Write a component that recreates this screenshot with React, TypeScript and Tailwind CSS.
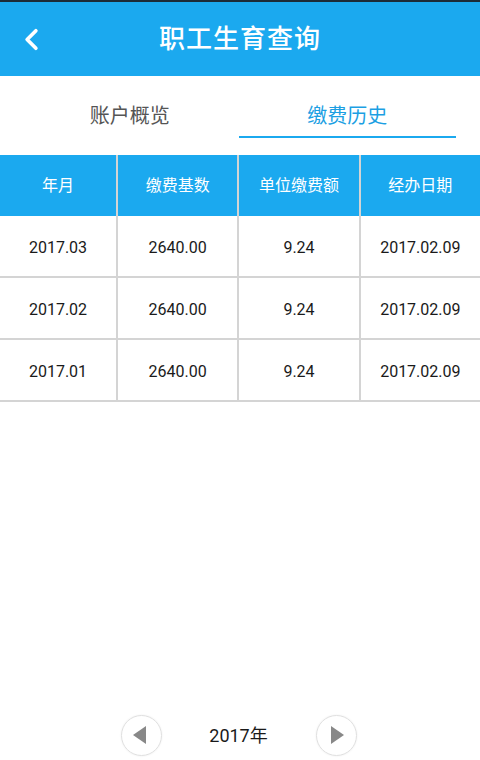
import { ChevronLeft } from "lucide-react";

const ROWS = [
  ["2017.03", "2640.00", "9.24", "2017.02.09"],
  ["2017.02", "2640.00", "9.24", "2017.02.09"],
  ["2017.01", "2640.00", "9.24", "2017.02.09"],
];

const HEADERS = ["年月", "缴费基数", "单位缴费额", "经办日期"];

export default function App() {
  return (
    <div
      className="w-[480px] h-[760px] bg-white flex flex-col overflow-hidden"
      style={{ fontFamily: '"Roboto", "Noto Sans CJK SC", sans-serif' }}
    >
      <div className="h-[2px] bg-[#1c2b38]" />
      <div className="h-[74px] bg-[#1ba9ef] relative flex items-center justify-center">
        <ChevronLeft className="absolute left-[14px] top-[20px] text-white" size={35} strokeWidth={2.5} />
        <span className="text-white text-[26px] tracking-[1px] font-medium">职工生育查询</span>
      </div>

      <div className="h-[79px] grid grid-cols-2 pl-[21px] pr-[24px]">
        <div className="flex flex-col items-center pt-[26px]">
          <span className="text-[20px] text-[#555] leading-[28px]">账户概览</span>
        </div>
        <div className="flex flex-col items-center pt-[26px]">
          <span className="text-[20px] text-[#1c9fe3] leading-[28px]">缴费历史</span>
          <div className="mt-[6px] h-[2px] w-full bg-[#1ba9ef]" />
        </div>
      </div>

      <div className="grid grid-cols-[116px_1fr_1fr_1fr] gap-x-[2px] bg-[#d4d4d4]">
        {HEADERS.map((h) => (
          <div key={h} className="h-[61px] bg-[#1ba9ef] flex items-center justify-center text-white text-[16px]">
            {h}
          </div>
        ))}
        {ROWS.map((row, i) =>
          row.map((cell, j) => (
            <div
              key={`${i}-${j}`}
              className="h-[60px] mb-[2px] pt-[3px] bg-white flex items-center justify-center text-[#1a1a1a] text-[16px]"
            >
              {cell}
            </div>
          ))
        )}
      </div>

      <div className="flex-1" />

      <div className="h-[50px] flex items-center justify-center pr-[3px]">
        <button className="w-[41px] h-[41px] rounded-full border border-[#e0e0e0] shadow-[0_0_2px_rgba(0,0,0,0.08)] flex items-center justify-center">
          <svg width="16" height="20" viewBox="0 0 16 20" className="-ml-[2px]">
            <polygon points="14,1 14,19 1,10" fill="#888" />
          </svg>
        </button>
        <span className="w-[154px] text-center text-[18px] text-[#1a1a1a]">2017年</span>
        <button className="w-[41px] h-[41px] rounded-full border border-[#e0e0e0] shadow-[0_0_2px_rgba(0,0,0,0.08)] flex items-center justify-center">
          <svg width="16" height="20" viewBox="0 0 16 20" className="ml-[2px]">
            <polygon points="2,1 2,19 15,10" fill="#888" />
          </svg>
        </button>
      </div>
    </div>
  );
}
